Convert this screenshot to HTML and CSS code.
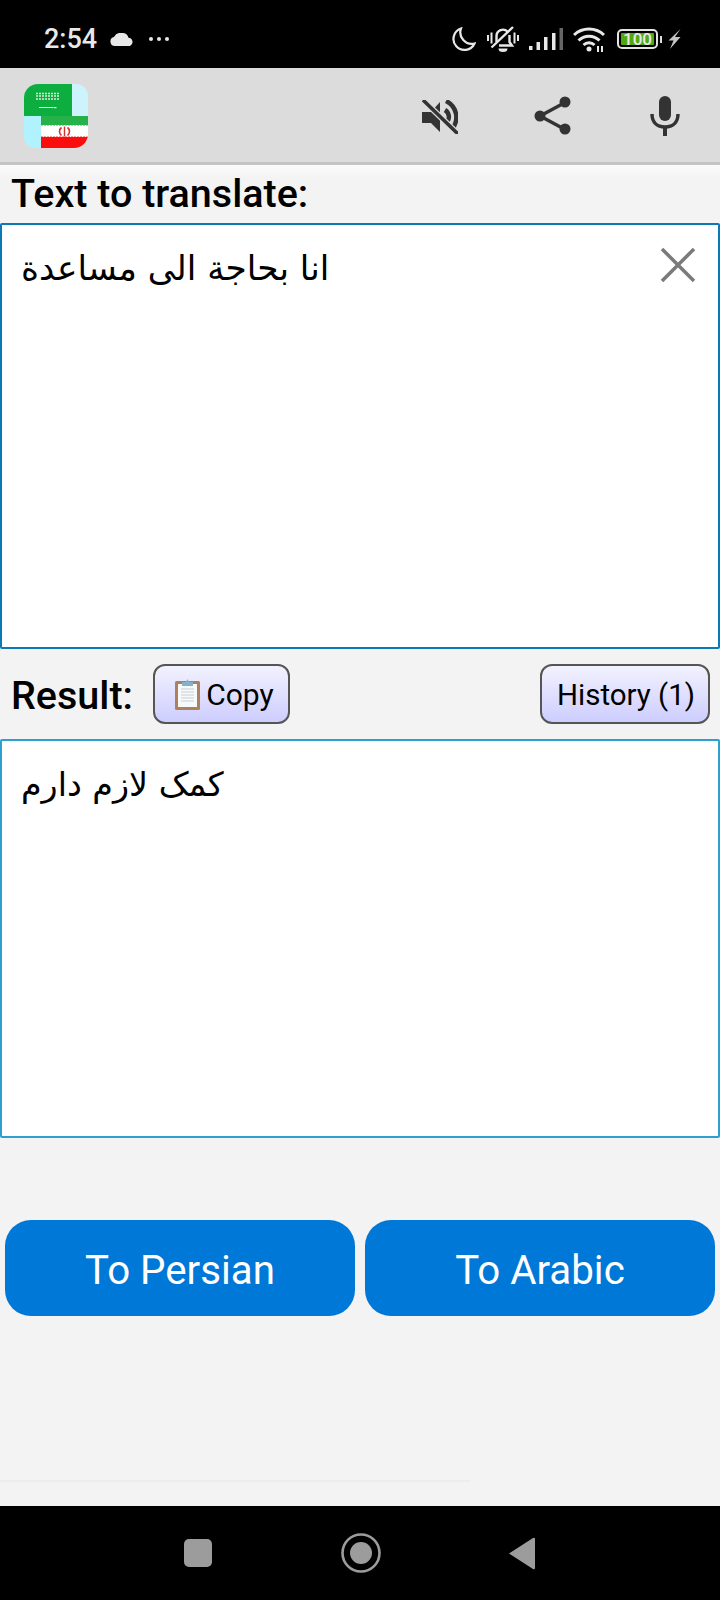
FILE: index.html
```html
<!DOCTYPE html>
<html lang="en">
<head>
<meta charset="utf-8">
<title>Arabic Persian Translator</title>
<link rel="stylesheet" href="styles.css">
</head>
<body>
<div class="statusbar">
  <div class="status-left">
    <span class="time">2:54</span>
    <svg class="ic-cloud" viewBox="0 0 24 13"><path d="M5 13a4.500 4.500 0 0 1-1-8.900A7.500 7.500 0 0 1 12 0a6.500 6.500 0 0 1 6.500 4.800A4.300 4.300 0 0 1 20 13Z" fill="#e8e8e8"/></svg>
    <svg class="ic-dots" viewBox="0 0 22 6"><circle cx="3" cy="3" r="2" fill="#e8e8e8"/><circle cx="11" cy="3" r="2" fill="#e8e8e8"/><circle cx="19" cy="3" r="2" fill="#e8e8e8"/></svg>
  </div>
  <div class="status-right">
    <svg class="ic-moon" viewBox="0 0 24 25"><path d="M9 1.500a11 11 0 1 0 13.500 15A11.500 11.500 0 0 1 9 1.500Z" fill="none" stroke="#e8e8e8" stroke-width="2.200"/></svg>
    <svg class="ic-bell" viewBox="0 0 32 27"><g fill="none" stroke="#e8e8e8" stroke-width="2.400"><path d="M9.500 16V10a6.500 6.500 0 0 1 11-4.500M22.500 9v7l2.500 3.500H12"/><path d="M4.500 21.500 26 1"/><path d="M1 9v6M4.500 6.500v11M27.500 6.500v11M31 9v6" stroke-width="2"/></g><path d="M11.500 22.500h9a4.500 3.500 0 0 1-9 0Z" fill="#e8e8e8"/></svg>
    <svg class="ic-signal" viewBox="0 0 34 22"><path d="M0 18h3.500v4H0zM7.500 14H11v8H7.500zM15 9h3.500v13H15zM23 5h3.500v17H23z" fill="#e8e8e8"/><path d="M30.500 0H34v22h-3.500z" fill="#666"/></svg>
    <svg class="ic-wifi" viewBox="0 0 32 25"><g fill="none" stroke="#e8e8e8" stroke-width="3"><path d="M1 8a22 22 0 0 1 30 0"/><path d="M5.500 13.500a15 15 0 0 1 21 0"/><path d="M10.500 18a8 8 0 0 1 11 0"/></g><circle cx="16" cy="22" r="2.500" fill="#e8e8e8"/><path d="M25 19v6M29 19v6" stroke="#e8e8e8" stroke-width="2"/></svg>
    <div class="battery"><div class="battery-body"><span class="battery-fill">100</span></div><span class="battery-tip"></span></div>
    <svg class="ic-bolt" viewBox="0 0 13 20"><path d="M12.500 0 .5 11.500h5L2 20l10.500-12H7Z" fill="#c4c4c4"/></svg>
  </div>
</div>

<header class="toolbar">
  <svg class="logo" viewBox="0 0 64 64">
    <defs><clipPath id="logo-clip"><path d="M14 0H52A12 12 0 0 1 64 12V50A14 14 0 0 1 50 64H12A12 12 0 0 1 0 52V14A14 14 0 0 1 14 0Z"/></clipPath></defs>
    <g clip-path="url(#logo-clip)">
      <rect width="64" height="64" fill="#cdf4fd"/>
      <rect y="32" width="17" height="32" fill="#b0f2fd"/>
      <rect width="48" height="32" fill="#0cae3f"/>
      <path d="M12 9.500h24M12 12h24M12 15h24" stroke="#d5efd9" stroke-width="1.500" stroke-dasharray="2 1"/>
      <path d="M15 23.500h14" stroke="#e4f6e8" stroke-width="1"/>
      <rect x="29.500" y="23" width="3" height="1.200" fill="#e4f6e8"/>
      <rect x="17" y="32" width="47" height="10" fill="#27b249"/>
      <rect x="17" y="41" width="47" height="13" fill="#fff"/>
      <rect x="17" y="53" width="47" height="11" fill="#fb0d0d"/>
      <path d="M17 41.500h47" stroke="#9adba9" stroke-width="1" stroke-dasharray="2 1"/>
      <path d="M17 52.500h47" stroke="#fb9a9a" stroke-width="1" stroke-dasharray="2 1"/>
      <path d="M37.500 43.500a5 5 0 0 0 0 8M43.500 43.500a5 5 0 0 1 0 8" fill="none" stroke="#d9302c" stroke-width="1.600"/>
      <rect x="39.800" y="42.500" width="1.400" height="10" fill="#d9302c"/>
    </g>
  </svg>
  <div class="toolbar-actions">
    <button class="tool-btn" type="button" aria-label="Mute">
      <svg class="ic-mute" viewBox="0 0 36 34"><path d="M0 12h9L18 2v30L9 23H0Z" fill="#333"/><path d="M23 10a8 8 0 0 1 2 12M24 1a18 18 0 0 1 6 28" fill="none" stroke="#333" stroke-width="4.500"/><path d="M1 0 36 34" stroke="#dcdcdc" stroke-width="6"/><path d="M1 0 36 34" stroke="#333" stroke-width="3.500"/></svg>
    </button>
    <button class="tool-btn" type="button" aria-label="Share">
      <svg viewBox="0 0 40 40"><path d="M7 20 33 6M7 20l26 14" stroke="#333" stroke-width="3.500"/><circle cx="32" cy="6" r="5.500" fill="#333"/><circle cx="7" cy="20" r="5.500" fill="#333"/><circle cx="32" cy="33" r="5.500" fill="#333"/></svg>
    </button>
    <button class="tool-btn" type="button" aria-label="Voice input">
      <svg viewBox="0 0 40 40"><rect x="14" y="0" width="12" height="25" rx="6" fill="#333"/><path d="M7 18c0 8 5 13 13 13s13-5 13-13" fill="none" stroke="#333" stroke-width="3.500"/><path d="M20 30v10" stroke="#333" stroke-width="4"/></svg>
    </button>
  </div>
</header>

<main class="content">
  <label class="label label-top">Text to translate:</label>
  <section class="box box-source">
    <p class="ar">انا بحاجة الى مساعدة</p>
    <svg class="clear" viewBox="0 0 36 36"><path d="M2 2 34 34M34 2 2 34" stroke="#7a7a7a" stroke-width="3.500"/></svg>
  </section>
  <div class="result-row">
    <label class="label label-result">Result:</label>
    <button class="pill pill-copy" type="button">
      <svg class="clip" viewBox="0 0 25 32"><rect y="3" width="25" height="29" rx="1.500" fill="#b0805c"/><rect x="3" y="6" width="19" height="23" fill="#f7fafb"/><path d="M6 11h13M6 14h13M6 17h13M6 20h13M6 23h13" stroke="#c5cdd3" stroke-width="1"/><path d="M7 4h4l1.500-3L14 4h4v4H7Z" fill="#83b1c6"/></svg><span>Copy</span>
    </button>
    <button class="pill pill-history" type="button">History (1)</button>
  </div>
  <section class="box box-result">
    <p class="ar">کمک لازم دارم</p>
  </section>
  <div class="actions">
    <button class="action" type="button">To Persian</button>
    <button class="action" type="button">To Arabic</button>
  </div>
  <div class="hairline"></div>
</main>

<nav class="navbar">
  <svg class="nav-square" viewBox="0 0 28 28"><rect width="28" height="28" rx="5" fill="#9c9c9c"/></svg>
  <svg class="nav-home" viewBox="0 0 40 40"><circle cx="20" cy="20" r="18.500" fill="none" stroke="#9c9c9c" stroke-width="2.600"/><circle cx="20" cy="20" r="11" fill="#9c9c9c"/></svg>
  <svg class="nav-back" viewBox="0 0 27 33"><path d="M1 16.500 25 1Q27 0 27 2V31Q27 33 25 32Z" fill="#9c9c9c"/></svg>
</nav>
</body>
</html>
```

FILE: styles.css
```css
* { box-sizing: border-box; }
html, body { margin: 0; padding: 0; }
body {
  width: 720px;
  height: 1600px;
  display: flex;
  flex-direction: column;
  background: #f3f3f3;
  font-family: Roboto, "Liberation Sans", sans-serif;
  color: #000;
  overflow: hidden;
}
svg { display: block; flex: none; }

.statusbar {
  height: 68px;
  background: #000;
  display: flex;
  justify-content: space-between;
  align-items: center;
  padding: 10px 0 0 44px;
  flex: none;
}
.status-left { display: flex; align-items: center; }
.time { color: #e8e8e8; font-size: 27px; font-weight: 500; width: 66px; }
.ic-cloud { width: 24px; height: 13px; }
.ic-dots { width: 22px; height: 6px; margin-left: 14px; }
.status-right { display: flex; align-items: center; padding-right: 39px; }
.ic-moon { width: 24px; height: 25px; }
.ic-bell { width: 32px; height: 27px; margin-left: 11px; }
.ic-signal { width: 34px; height: 22px; margin-left: 10px; }
.ic-wifi { width: 32px; height: 25px; margin-left: 10px; }
.battery { display: flex; align-items: center; margin-left: 12px; }
.battery-body {
  width: 41px;
  height: 20px;
  border: 2px solid #e4e4e4;
  border-radius: 5px;
  padding: 2px;
  display: flex;
}
.battery-fill {
  flex: 1;
  background: #4fa810;
  color: #e8e8e8;
  font-size: 17px;
  font-weight: 500;
  line-height: 12px;
  text-align: center;
  border-radius: 1px;
}
.battery-tip { width: 2px; height: 7px; margin-left: 2px; background: #ddd; }
.ic-bolt { width: 13px; height: 20px; margin-left: 6px; }

.toolbar {
  height: 97px;
  flex: none;
  background: #dcdcdc;
  border-bottom: 3px solid #c4c4c4;
  display: flex;
  align-items: center;
  justify-content: space-between;
  padding: 2px 35px 0 24px;
}
.logo { width: 64px; height: 64px; }
.toolbar-actions { display: flex; gap: 72px; }
.tool-btn {
  width: 40px;
  height: 40px;
  padding: 0;
  border: 0;
  background: none;
}
.ic-mute { width: 36px; height: 34px; margin: 1px 0 0 1px; }

.content { flex: 1; display: flex; flex-direction: column; background: linear-gradient(#fbfbfb, #f3f3f3 14px); }
.label { font-size: 39.5px; font-weight: 500; line-height: 42px; padding-left: 11px; flex: none; }
.label-top { height: 58px; padding-top: 8px; }
.label-result { margin-top: 3px; }
.box {
  position: relative;
  background: #fff;
  border: 2px solid #0b79b8;
  border-radius: 2px;
  flex: none;
}
.box-source { height: 426px; }
.box-result { height: 399px; border-color: #2d9fd0; }
.ar {
  margin: 0;
  padding: 19px 0 0 19px;
  font-family: "DejaVu Sans", sans-serif;
  font-size: 34.3px;
  line-height: 48px;
  unicode-bidi: plaintext;
  text-align: left;
}
.box-result .ar { font-size: 33.3px; padding-top: 20px; }
.clear { position: absolute; top: 22px; right: 22px; width: 36px; height: 36px; }

.result-row {
  height: 90px;
  flex: none;
  display: flex;
  align-items: center;
  padding-right: 10px;
}
.pill {
  height: 60px;
  border: 2px solid #555;
  border-radius: 12px;
  background: linear-gradient(#f3f2fe, #cdcdff);
  font-family: Roboto, sans-serif;
  font-size: 30px;
  color: #000;
  padding: 0;
  display: flex;
  align-items: center;
  justify-content: center;
}
.pill-copy { width: 137px; margin-left: 20px; gap: 6px; padding-left: 6px; }
.clip { width: 25px; height: 32px; }
.pill-history { width: 170px; margin-left: auto; font-size: 29.5px; padding: 1px 0 0 2px; }

.actions { display: flex; gap: 10px; padding: 82px 5px 0; flex: none; }
.action {
  flex: 1;
  height: 96px;
  border: 0;
  border-radius: 26px;
  background: #0078d7;
  color: #fff;
  font-family: Roboto, sans-serif;
  font-size: 40.25px;
  padding: 5px 0 0;
}
.hairline { width: 470px; height: 2px; background: #ededed; margin-top: 164px; flex: none; }

.navbar {
  height: 94px;
  flex: none;
  background: #000;
  display: flex;
  align-items: center;
  padding: 0 0 0 184px;
}
.nav-square { width: 28px; height: 28px; }
.nav-home { width: 40px; height: 40px; margin-left: 129px; }
.nav-back { width: 27px; height: 33px; margin-left: 127px; }
```
